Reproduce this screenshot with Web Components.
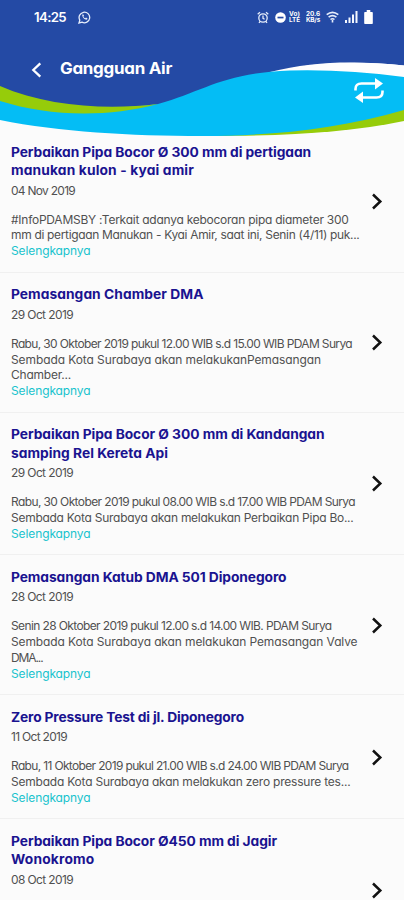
<!DOCTYPE html>
<html lang="id">
<head>
<meta charset="utf-8">
<title>Gangguan Air</title>
<style>
html,body{margin:0;height:900px;overflow:hidden;background:#fbfbfb}
body{font-family:Inter,"Open Sans",sans-serif;font-feature-settings:"cv11"}
</style>
</head>
<body>
<outage-screen></outage-screen>
<script>
// One line of text, slightly widened and tracked so that it spans the width given in "w".
class FitLine extends HTMLElement{
  connectedCallback(){
    const r=this.attachShadow({mode:'open'});
    r.innerHTML='<style>:host{display:block;white-space:nowrap}span{display:inline-block;white-space:pre;transform:scaleX(1.06);transform-origin:0 50%}</style><span></span>';
    const s=r.querySelector('span');
    s.textContent=this.getAttribute('text');
    const w=+this.getAttribute('w'),n=[...s.textContent].length;
    s.style.letterSpacing=((w-s.getBoundingClientRect().width)/n/1.06)+'px';
  }
}
customElements.define('fit-line',FitLine);

class StatusBar extends HTMLElement{
  connectedCallback(){
    this.attachShadow({mode:'open'}).innerHTML=`
<style>
:host{display:flex;align-items:center;height:34px;padding:0 31px 0 34px;box-sizing:border-box;color:#fff}
svg{display:block;flex:none}
.time{font-size:12.500px;font-weight:600;line-height:16px;width:32px;padding-top:2px}
.wa{margin-left:12px}
.right{margin-left:auto;display:flex;align-items:center}
.tiny{display:grid;font-weight:700;font-size:6px;line-height:6px}
</style>
<fit-line class="time" w="32" text="14:25"></fit-line>
<svg class="wa" width="13" height="13" viewBox="0 0 13 13" fill="none" stroke="#e6edfb" stroke-width="1.3"><path d="M1 12l.8-2.9A5.3 5.3 0 1 1 4 11.2z"/><path d="M4.300 3.500c-.5 2.500 2.500 5.600 4.800 5.100l.4-1.200-1.500-.8-.7.7C6.300 7 5.700 6.300 5.400 5.500L6 4.800 5.400 3.400z" fill="#e6edfb" stroke="none"/></svg>
<div class="right">
<svg width="12" height="13" viewBox="0 0 12 13" fill="none" stroke="#e6edfb" stroke-width="1.300"><circle cx="6" cy="7" r="4.200"/><path d="M6 4.500V7.300l1.600.9M.7 3.200L3 1.200M11.300 3.200L9 1.200M3 10.500l-1 1.300M9 10.500l1 1.300"/></svg>
<svg style="margin-left:6px" width="11" height="11" viewBox="0 0 11 11"><circle cx="5.500" cy="5.500" r="5.300" fill="#fff"/><rect x="2.500" y="4.700" width="6" height="1.700" fill="#244aa5"/></svg>
<div class="tiny" style="margin-left:3px;width:11px"><fit-line w="11" text="Vo)"></fit-line><fit-line w="11" text="LTE"></fit-line></div>
<div class="tiny" style="margin-left:6px;width:14px"><fit-line w="14" text="20.6"></fit-line><fit-line w="14" text="KB/s"></fit-line></div>
<svg style="margin-left:6px" width="13" height="12" viewBox="0 0 13 12" fill="none" stroke="#e6edfb" stroke-width="1.600"><path d="M.7 3.700Q6.500-1 12.300 3.700M2.600 6.200Q6.500 3 10.400 6.200M4.500 8.500q2-1.600 4 0"/><path d="M6.500 9v2.500" /></svg>
<svg style="margin-left:6px" width="13" height="12" viewBox="0 0 13 12" fill="#f4f7ff"><rect x="0" y="9" width="2" height="3"/><rect x="3.500" y="6.500" width="2" height="5.500"/><rect x="7" y="3.500" width="2" height="8.500"/><rect x="10.500" y="0" width="2" height="12"/></svg>
<svg style="margin-left:6px" width="9" height="14" viewBox="0 0 9 14" fill="#fff"><path d="M2.700 0h3.600v2H8q.8 0 .8.800v10.400q0 .8-.8.800H1q-.8 0-.8-.8V2.800Q.2 2 1 2h1.700z"/></svg>
</div>`;
  }
}
customElements.define('status-bar',StatusBar);

class AppHeader extends HTMLElement{
  connectedCallback(){
    this.attachShadow({mode:'open'}).innerHTML=`
<style>
:host{display:block;position:relative;height:130.600px;flex:none}
.bg{position:absolute;left:0;top:0;z-index:0}
.front{position:relative;z-index:1}
.nav{display:flex;align-items:flex-start;padding:24px 20px 0 31px;color:#fff}
.title{margin-left:18px;font-size:16px;line-height:20px;font-weight:700}
.back{margin-top:4px}
.sync{margin:20px 0 0 auto}
svg{display:block}
</style>
<svg class="bg" width="404" height="140" viewBox="0 0 404 140">
<rect width="404" height="140" fill="#fbfbfb"/>
<path d="M0 0H404V65.500C362 61 315 61 270 73V110H0Z" fill="#244aa5"/>
<path d="M270 72C315 60 362 61 404 65.500V90H270Z" fill="#fefefe"/>
<path d="M404 121C350 132 290 136 215 136L300 115L404 100Z" fill="#96cc0a"/>
<path d="M0 95C48 110 108 111 158 104C205 91 222 73 290 70.500Q345 69 404 77V110C335 130 272 135.500 202 136C130 136 60 132 0 120Z" fill="#04bdf5"/>
<path d="M0 86C48 107 108 110 158 104C105 118 48 116 0 101Z" fill="#96cc0a"/>
</svg>
<div class="front">
<status-bar></status-bar>
<div class="nav">
<svg class="back" width="11" height="16" viewBox="0 0 11 16" fill="none" stroke="#fff" stroke-width="2.300"><path d="M9.300 1.300L2.300 8l7 6.700"/></svg>
<fit-line class="title" w="112" text="Gangguan Air"></fit-line>
<svg class="sync" width="30" height="25" viewBox="0 0 30 25"><path d="M1.500 12.500V11Q1.500 5.500 7.500 5.500H22M28.500 12.500V14Q28.500 19.500 22.500 19.500H8" fill="none" stroke="#fff" stroke-width="2.600"/><path d="M21 0L29 5.500L21 11.500ZM9 13.500V25L1 19.500Z" fill="#fff"/></svg>
</div>
</div>`;
  }
}
customElements.define('app-header',AppHeader);

class NewsItem extends HTMLElement{
  set data(d){
    const lines=(c,a)=>a.map(([t,w])=>`<fit-line class="${c}" w="${w}" text="${t}"></fit-line>`).join('');
    this.attachShadow({mode:'open'}).innerHTML=`
<style>
:host{display:flex;align-items:stretch;justify-content:space-between;box-sizing:border-box;min-height:${d.h||0}px;padding:12.300px 21px 11.700px 11px;border-bottom:1px solid #f0f0f0}
.t{font-size:13px;font-weight:750;line-height:18.300px;color:#1a1390}
.d,.b,.m{font-size:11.300px;line-height:15.900px;color:#505050}
.d{margin:4.200px 0 13px}
.m{color:#18c3cd}
svg{display:block;flex:none;align-self:center}
</style>
<div>${lines('t',d.t)}${lines('d',[d.d])}${lines('b',d.b)}${d.b.length?'<fit-line class="m" w="79.500" text="Selengkapnya"></fit-line>':''}</div>
<svg width="12" height="17" viewBox="0 0 12 17" fill="none" stroke="#111" stroke-width="2.500"><path d="M2 1.500L9.300 8.500L2 15.500"/></svg>`;
  }
}
customElements.define('news-item',NewsItem);

const items=[
{t:[['Perbaikan Pipa Bocor Ø 300 mm di pertigaan',300],['manukan kulon - kyai amir',183]],d:['04 Nov 2019',64],b:[['#InfoPDAMSBY :Terkait adanya kebocoran pipa diameter 300',338],['mm di pertigaan Manukan - Kyai Amir, saat ini, Senin (4/11) puk...',348.5]]},
{t:[['Pemasangan Chamber DMA',192.5]],d:['29 Oct 2019',62],b:[['Rabu, 30 Oktober 2019 pukul 12.00 WIB s.d 15.00 WIB PDAM Surya',341],['Sembada Kota Surabaya akan melakukanPemasangan',310],['Chamber...',60]]},
{t:[['Perbaikan Pipa Bocor Ø 300 mm di Kandangan',313.5],['samping Rel Kereta Api',157]],d:['29 Oct 2019',62],b:[['Rabu, 30 Oktober 2019 pukul 08.00 WIB s.d 17.00 WIB PDAM Surya',344],['Sembada Kota Surabaya akan melakukan Perbaikan Pipa Bo...',342.5]]},
{t:[['Pemasangan Katub DMA 501 Diponegoro',275.5]],d:['28 Oct 2019',62],b:[['Senin 28 Oktober 2019 pukul 12.00 s.d 14.00 WIB. PDAM Surya',320.5],['Sembada Kota Surabaya akan melakukan Pemasangan Valve',346.5],['DMA...',31.5]]},
{t:[['Zero Pressure Test di jl. Diponegoro',233]],d:['11 Oct 2019',56],b:[['Rabu, 11 Oktober 2019 pukul 21.00 WIB s.d 24.00 WIB PDAM Surya',337.5],['Sembada Kota Surabaya akan melakukan zero pressure tes...',339.5]]},
{t:[['Perbaikan Pipa Bocor Ø450 mm di Jagir',266],['Wonokromo',83.5]],d:['08 Oct 2019',62],b:[],h:142.5}
];
class OutageScreen extends HTMLElement{
  connectedCallback(){
    const r=this.attachShadow({mode:'open'});
    r.innerHTML='<style>:host{display:flex;flex-direction:column;width:404px;height:900px;overflow:hidden}main{display:flex;flex-direction:column}news-item{flex:none}</style><app-header></app-header><main></main>';
    const m=r.querySelector('main');
    for(const d of items){const e=document.createElement('news-item');m.append(e);e.data=d}
  }
}
customElements.define('outage-screen',OutageScreen);
</script>
</body>
</html>
